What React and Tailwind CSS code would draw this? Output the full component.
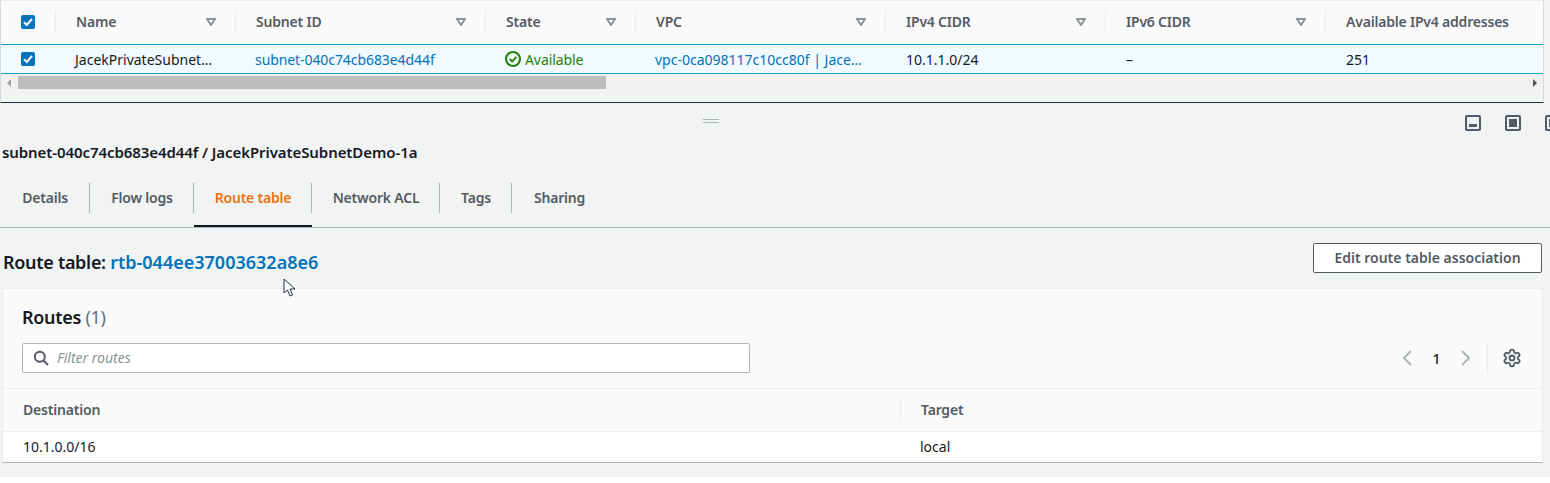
import React from 'react';
import { Settings } from 'lucide-react';

const FONT = 'font-["Noto_Sans","Open_Sans",sans-serif]';

const columns = [
  { label: 'Name', width: 'w-[180px]' },
  { label: 'Subnet ID', width: 'w-[250px]' },
  { label: 'State', width: 'w-[150px]' },
  { label: 'VPC', width: 'w-[250px]' },
  { label: 'IPv4 CIDR', width: 'w-[220px]' },
  { label: 'IPv6 CIDR', width: 'w-[220px]' },
];

const tabs = [
  { label: 'Details', width: 'w-[90px]' },
  { label: 'Flow logs', width: 'w-[104px]' },
  { label: 'Route table', width: 'w-[118px]', active: true },
  { label: 'Network ACL', width: 'w-[128px]' },
  { label: 'Tags', width: 'w-[72px]' },
  { label: 'Sharing', width: 'w-[94px]', last: true },
];

function Checkbox() {
  return (
    <svg width="14" height="14" viewBox="0 0 14 14" className="block">
      <rect width="14" height="14" rx="2" fill="#0073bb" />
      <path d="M3 7.2 L5.8 10 L11 3.8" fill="none" stroke="#fff" strokeWidth="2" />
    </svg>
  );
}

function FilterIcon() {
  return (
    <svg width="10" height="8" viewBox="0 0 10 8" className="block">
      <path d="M1 1 H9 L5 7 Z" fill="none" stroke="#879596" strokeWidth="2" />
    </svg>
  );
}

function PanelIcon({ bar }) {
  return (
    <svg width="16" height="16" viewBox="0 0 16 16" className="block shrink-0">
      <rect x="1" y="1" width="14" height="14" rx="1" fill="none" stroke="#545b64" strokeWidth="2" />
      <rect x="4" y={bar === 'large' ? 4 : 9} width="8" height={bar === 'large' ? 8 : 3} fill="#545b64" />
    </svg>
  );
}

function Cursor() {
  return (
    <svg width="14" height="20" viewBox="0 0 14 20" className="absolute top-[278px] left-[283px]">
      <path d="M1 1 V15 L4.5 12 L7 18 L9.5 17 L7 11 H12 Z" fill="#fff" stroke="#232f3e" strokeWidth="1" />
    </svg>
  );
}

export default function App() {
  return (
    <div className={`relative h-[483px] w-[1550px] overflow-hidden bg-white text-[14px] text-[#16191f] ${FONT}`}>
      <div className="h-[477px] bg-[#f2f3f3]">
        {/* Subnets table */}
        <div className="h-[103px] w-[1544px] border-t border-r border-b border-l border-t-[#eaeded] border-r-[#d5dbdb] border-b-[#232f3e] border-l-[#d5dbdb]">
          <div className="flex h-[43px] items-center bg-[#fafafa] pb-[2px] font-semibold tracking-[-0.2px] text-[#545b64]">
            <div className="flex h-[21px] w-[55px] items-center border-r border-[#eaeded] pl-[20px]">
              <Checkbox />
            </div>
            {columns.map((col) => (
              <div key={col.label} className={`flex h-[21px] ${col.width} items-center justify-between border-r border-[#eaeded] pr-[19px] pl-[20px]`}>
                <span>{col.label}</span>
                <FilterIcon />
              </div>
            ))}
            <div className="pl-[20px] whitespace-nowrap">Available IPv4 addresses</div>
          </div>
          <div className="flex h-[30px] items-center border-t border-b border-[#00a1c9] bg-[#f1faff]">
            <div className="w-[55px] pl-[20px]"><Checkbox /></div>
            <div className="w-[180px] pl-[19px]">JacekPrivateSubnet…</div>
            <div className="w-[250px] pl-[19px] tracking-[-0.08px] text-[#0073bb]">subnet-040c74cb683e4d44f</div>
            <div className="flex w-[150px] items-center gap-[4px] pl-[19px] tracking-[-0.08px] text-[#1d8102]">
              <svg width="16" height="16" viewBox="0 0 16 16" className="block">
                <circle cx="8" cy="8" r="7" fill="none" stroke="#1d8102" strokeWidth="2" />
                <path d="M4.8 8 L7.2 10.4 L11.4 5.8" fill="none" stroke="#1d8102" strokeWidth="1.8" />
              </svg>
              <span>Available</span>
            </div>
            <div className="w-[250px] pl-[19px] text-[#0073bb]">vpc-0ca098117c10cc80f | Jace…</div>
            <div className="w-[220px] pl-[20px]">10.1.1.0/24</div>
            <div className="w-[220px] pl-[20px]">–</div>
            <div className="pl-[20px]">251</div>
          </div>
          <div className="flex h-[17px] items-center bg-[#f1f1f1] px-[6px]">
            <span className="h-0 w-0 border-y-[4px] border-r-[4px] border-y-transparent border-r-[#a3a3a3]" />
            <div className="ml-[7px] h-[13px] w-[588px] bg-[#bdbdbd]" />
            <span className="ml-auto h-0 w-0 border-y-[4px] border-l-[4px] border-y-transparent border-l-[#505050]" />
          </div>
        </div>

        {/* Split panel */}
        <div className="flex h-[37px] items-start">
          <div className="mt-[16px] ml-[703px] h-[4px] w-[16px] border-y border-[#aab7b8]" />
          <div className="absolute top-[115px] left-[1465px] flex w-[100px] gap-[24px]">
            <PanelIcon />
            <PanelIcon bar="large" />
            <PanelIcon bar="large" />
          </div>
        </div>
        <div className="h-[26px] pl-[2px] text-[15px] leading-[24px] font-semibold tracking-[-0.08px]">subnet-040c74cb683e4d44f / JacekPrivateSubnetDemo-1a</div>

        <div className="mt-[17px] flex h-[45px] border-b border-[#aab7b8] font-semibold tracking-[-0.2px] text-[#545b64]">
          {tabs.map((tab) => (
            <div key={tab.label} className={`relative h-[44px] ${tab.width} ${tab.active ? 'text-[#ec7211]' : ''}`}>
              <div className={`flex h-[30px] w-full items-center justify-center pb-[1px] pl-[1px] ${tab.last ? '' : 'border-r border-[#aab7b8]'}`}>{tab.label}</div>
              {tab.active && <div className="absolute right-0 bottom-0 left-0 h-[2px] bg-[#16191f]" />}
            </div>
          ))}
        </div>

        <div className="flex h-[60px] items-start justify-between pr-[8px] pl-[3px]">
          <div className="mt-[21px] text-[18px] leading-[27px] font-semibold">
            <span className="tracking-[-0.3px]">Route table: </span><span className="text-[#0073bb]">rtb-044ee37003632a8e6</span>
          </div>
          <button className="mt-[15px] h-[30px] w-[229px] rounded-[2px] border border-[#545b64] bg-white pb-[1px] font-semibold text-[#545b64]">
            Edit route table association
          </button>
        </div>

        {/* Routes card */}
        <div className="ml-[2px] h-[175px] w-[1541px] border border-[#eaeded] border-b-[#aab7b8] bg-[#fafafa]">
          <div className="h-[100px] border-b border-[#eaeded] px-[19px]">
            <div className="pt-[15px] text-[18px] leading-[27px] font-semibold tracking-[-0.3px]">
              Routes <span className="font-normal text-[#687078]">(1)</span>
            </div>
            <div className="mt-[12px] flex items-center">
              <div className="flex h-[30px] w-[728px] items-center gap-[8px] rounded-[2px] border border-[#aab7b8] bg-white pl-[10px]">
                <svg width="16" height="16" viewBox="0 0 16 16" className="block">
                  <circle cx="6.8" cy="6.8" r="5" fill="none" stroke="#545b64" strokeWidth="2" />
                  <path d="M10.5 10.5 L15 15" stroke="#545b64" strokeWidth="2" />
                </svg>
                <span className="pb-[1px] text-[14px] text-[#879596] italic">Filter routes</span>
              </div>
              <div className="ml-auto flex items-center pr-[1px]">
                <svg width="12" height="16" viewBox="0 0 12 16" className="block">
                  <path d="M10 1 L3 8 L10 15" fill="none" stroke="#aab7b8" strokeWidth="2" />
                </svg>
                <span className="w-[47px] text-center font-medium">1</span>
                <svg width="12" height="16" viewBox="0 0 12 16" className="block">
                  <path d="M2 1 L9 8 L2 15" fill="none" stroke="#aab7b8" strokeWidth="2" />
                </svg>
                <div className="mr-[14px] ml-[15px] h-[30px] border-l border-[#eaeded]" />
                <Settings size={20} strokeWidth={2.2} color="#545b64" className="block" />
              </div>
            </div>
          </div>
          <div className="flex h-[43px] items-center border-b border-[#eaeded] pb-[2px] font-semibold tracking-[-0.2px] text-[#545b64]">
            <div className="flex h-[21px] w-[898px] items-center border-r border-[#eaeded] pl-[20px]">Destination</div>
            <div className="pl-[20px]">Target</div>
          </div>
          <div className="flex h-[30px] items-center bg-white pb-[2px]">
            <div className="w-[898px] pl-[20px]">10.1.0.0/16</div>
            <div className="pl-[19px]">local</div>
          </div>
        </div>
      </div>
      <Cursor />
    </div>
  );
}
